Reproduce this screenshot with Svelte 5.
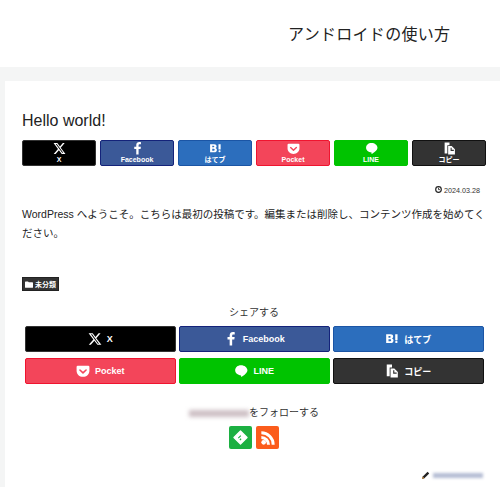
<script>
	const top = [
		{ key: 'x', label: 'X' },
		{ key: 'fb', label: 'Facebook' },
		{ key: 'hb', label: 'はてブ' },
		{ key: 'pk', label: 'Pocket' },
		{ key: 'ln', label: 'LINE' },
		{ key: 'cp', label: 'コピー' }
	];
</script>

{#snippet icon(key, size)}
	{#if key === 'x'}
		<svg width={size} height={size} viewBox="0 0 24 24" fill="#fff"><path d="M18.200 2h3.400l-7.400 8.500L23 22h-6.800l-5.300-7-6.100 7H1.300l7.900-9.100L1 2h7l4.800 6.400zm-1.200 18h1.900L7 3.900H5z" /></svg>
	{:else if key === 'fb'}
		<svg width={size} height={size} viewBox="0 0 24 24" fill="#fff"><path d="M14 23V13h3.700l.6-4.300H14V6.200c0-1.300.4-2.100 2.200-2.100h2.200V.3C18 .2 16.700 0 15.200 0 12 0 9.700 2 9.700 5.700v3H6V13h3.700v10z" /></svg>
	{:else if key === 'hb'}
		<svg width={size} height={size} viewBox="0 0 24 24" fill="#fff"><path fill-rule="evenodd" d="M2 4h7.500c3 0 4.500 1.400 4.500 3.700 0 1.700-.9 2.800-2.300 3.300 1.800.4 2.900 1.700 2.900 3.600 0 2.800-2 4.400-5.200 4.400H2zm4 3v2.800h2.200c1 0 1.600-.5 1.600-1.400S9.200 7 8.200 7zm0 5.600V16h2.600c1.200 0 1.900-.6 1.900-1.700s-.7-1.700-1.900-1.700zM17.500 4h4v10h-4zm2 11a2 2 0 1 1 0 4 2 2 0 0 1 0-4z" /></svg>
	{:else if key === 'pk'}
		<svg width={size} height={size} viewBox="0 0 24 24" fill="#fff"><path fill-rule="evenodd" d="M3 3h18a2 2 0 0 1 2 2v6.500C23 17.800 18 22 12 22S1 17.800 1 11.500V5a2 2 0 0 1 2-2zm3.700 6a1.300 1.300 0 0 0-.9 2.200l5.300 5a1.300 1.300 0 0 0 1.800 0l5.300-5a1.300 1.300 0 0 0-1.800-1.900L12 13.400 7.600 9.300A1.300 1.300 0 0 0 6.700 9z" /></svg>
	{:else if key === 'ln'}
		<svg width={size} height={size} viewBox="0 0 24 24" fill="#fff"><path d="M12 2c6 0 11 3.900 11 8.800 0 4.300-5.100 8.500-10.300 11.200-.7.300-.8-.3-.7-.8l.2-1.700c-6-.3-10.200-4-10.200-8.700C2 5.900 6 2 12 2z" /></svg>
	{:else}
		<svg width={size} height={size} viewBox="0 0 24 24" fill="#fff"><path fill-rule="evenodd" d="M3 1h9v5H8v15H3zM9.500 7.500H16l6 6V23H9.500zm4.500 3v6h6v-2h-4v-4z" /></svg>
	{/if}
{/snippet}

<div class="page">
	<header class="head">アンドロイドの使い方</header>
	<main class="card">
		<h1 class="title">Hello world!</h1>

		<div class="share-top">
			{#each top as b (b.key)}
				<div class="sbtn {b.key}">
					{@render icon(b.key, 13)}
					<span>{b.label}</span>
				</div>
			{/each}
		</div>

		<div class="date">
			<svg width="7" height="7" viewBox="0 0 12 12" fill="none" stroke="#222" stroke-width="2"><circle cx="6" cy="6" r="4.800" /><path d="M6 3v3.200h2.500" stroke-width="1.400" /></svg>
			2024.03.28
		</div>

		<p class="body">WordPress へようこそ。こちらは最初の投稿です。編集または削除し、コンテンツ作成を始めてください。</p>

		<div class="cat">
			<svg width="8" height="7" viewBox="0 0 12 10" fill="#fff"><path d="M0 1.500A1 1 0 0 1 1 .5h3.500l1.200 1.300H11a1 1 0 0 1 1 1V9a1 1 0 0 1-1 1H1a1 1 0 0 1-1-1z" /></svg>
			<span>未分類</span>
		</div>

		<div class="share-label">シェアする</div>
		<div class="share-bottom">
			{#each top as b (b.key)}
				<div class="wbtn {b.key}">
					{@render icon(b.key, 14)}
					<span>{b.label}</span>
				</div>
			{/each}
		</div>

		<div class="follow-label"><span class="blur-name"></span>をフォローする</div>
		<div class="follow">
			<div class="fbtn feedly">
				<svg width="15" height="15" viewBox="0 0 24 24"><path d="M12 1.500 22.500 12 12 22.500 1.500 12z" fill="#fff" stroke="#fff" stroke-width="2" stroke-linejoin="round" /><path d="M12.500 9 8.500 13m4.500 1-2 2" stroke="#1cb042" stroke-width="1.800" fill="none" /></svg>
			</div>
			<div class="fbtn rss">
				<svg width="16" height="16" viewBox="0 0 24 24" fill="#fff"><circle cx="5.500" cy="18.500" r="3.500" /><path d="M2 9v4.500a8.500 8.500 0 0 1 8.500 8.500H15A13 13 0 0 0 2 9z" /><path d="M2 2v4.500A15.500 15.500 0 0 1 17.500 22H22A20 20 0 0 0 2 2z" /></svg>
			</div>
		</div>

		<div class="author">
			<svg width="8" height="8" viewBox="0 0 10 10"><path d="M0 10l1-3 6-6 2 2-6 6z" fill="#222" /><path d="M0 10l1-3 2 2z" fill="#c98a3a" /></svg>
			<span class="blur-author"></span>
		</div>
	</main>
</div>

<style>
	:global(body) {
		margin: 0;
	}
	.page {
		width: 500px;
		height: 487px;
		overflow: hidden;
		background: #f4f5f5;
		font-family: "Liberation Sans", "Noto Sans CJK JP", sans-serif;
		color: #333;
	}
	.head {
		height: 67px;
		box-sizing: border-box;
		background: #fff;
		padding: 23px 0 0 288px;
		font-size: 16px;
		line-height: 24px;
		letter-spacing: 0.3px;
		color: #222;
	}
	.card {
		margin: 14px 0 0 5px;
		padding: 28px 14px 0 17px;
		height: 406px;
		background: #fff;
	}
	.title {
		margin: 0;
		font-size: 16px;
		font-weight: 400;
		line-height: 24px;
		height: 24px;
		color: #222;
	}
	.share-top {
		display: grid;
		grid-template-columns: repeat(6, 74px);
		gap: 4px;
		margin-top: 7px;
	}
	.sbtn {
		height: 26px;
		box-sizing: border-box;
		border-radius: 2px;
		border: 1px solid;
		display: flex;
		flex-direction: column;
		align-items: center;
		justify-content: center;
		color: #fff;
		font-size: 7px;
		font-weight: 700;
		line-height: 10px;
	}
	.wbtn {
		height: 26px;
		box-sizing: border-box;
		border-radius: 2px;
		border: 1px solid;
		display: flex;
		align-items: center;
		justify-content: center;
		gap: 5px;
		color: #fff;
		font-size: 9px;
		font-weight: 700;
	}
	.x { background: #000; border-color: #333; }
	.fb { background: #3b5998; border-color: #14237a; }
	.hb { background: #2c6ebd; border-color: #1b55a5; }
	.pk { background: #f3455a; border-color: #f0142f; }
	.ln { background: #00c300; border-color: #00c300; }
	.cp { background: #333; border-color: #111; }
	.date {
		margin-top: 19px;
		height: 12px;
		padding-right: 6px;
		text-align: right;
		font-size: 7.200px;
		line-height: 12px;
		color: #333;
	}
	.body {
		margin: 8px 0 0;
		font-size: 10.500px;
		line-height: 19px;
		color: #222;
	}
	.cat {
		display: flex;
		align-items: center;
		width: fit-content;
		gap: 2px;
		margin-top: 34px;
		height: 14px;
		box-sizing: border-box;
		padding: 0 2px;
		background: #333;
		border: 1px solid #222;
		color: #fff;
		font-size: 7px;
		font-weight: 700;
	}
	.share-label {
		margin-top: 15px;
		height: 14px;
		text-align: center;
		font-size: 10px;
		line-height: 14px;
		color: #333;
	}
	.share-bottom {
		display: grid;
		grid-template-columns: repeat(3, 150.500px);
		gap: 6px 3.500px;
		margin: 6px 0 0 3px;
	}
	.follow-label {
		margin-top: 22px;
		height: 14px;
		display: flex;
		justify-content: center;
		align-items: center;
		font-size: 10px;
		line-height: 14px;
		color: #333;
	}
	.blur-name {
		width: 60px;
		height: 7px;
		background: #cdbfc4;
		filter: blur(2px);
	}
	.follow {
		display: flex;
		justify-content: center;
		gap: 4px;
		margin-top: 6px;
	}
	.fbtn {
		width: 23px;
		height: 23px;
		border-radius: 2px;
		display: flex;
		align-items: center;
		justify-content: center;
	}
	.feedly { background: #1cb042; }
	.rss { background: #fb5c1c; }
	.author {
		display: flex;
		align-items: center;
		gap: 3px;
		margin: 22px 0 0 400px;
	}
	.blur-author {
		width: 50px;
		height: 5px;
		background: #b5bdd4;
		filter: blur(1.500px);
	}
</style>
